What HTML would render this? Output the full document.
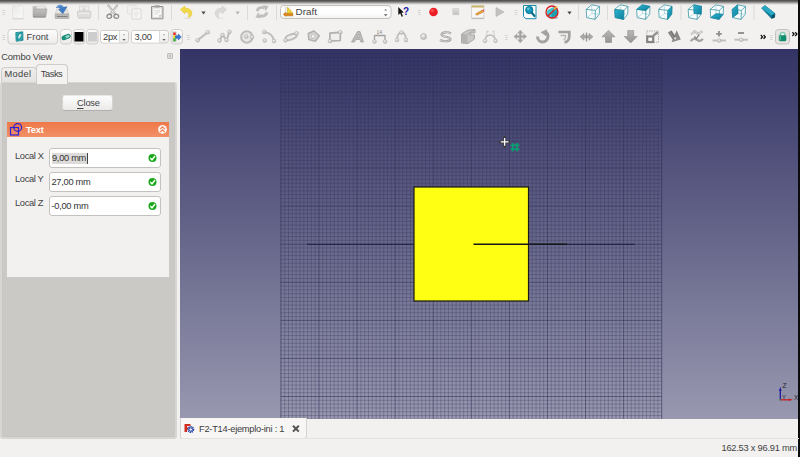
<!DOCTYPE html>
<html><head><meta charset="utf-8"><title>FreeCAD</title>
<style>
*{box-sizing:border-box;margin:0;padding:0}
html,body{width:800px;height:457px;overflow:hidden;background:#f2f1f0;font-family:"Liberation Sans","DejaVu Sans",sans-serif;font-size:9.3px;color:#424242}
.a{position:absolute}
.t{position:absolute;white-space:nowrap;line-height:12px;height:12px}
#topedge{left:0;top:0;width:800px;height:4.5px;background:linear-gradient(#484848,#696969 28%,#9a9998 52%,#d4d3d2 78%,#f2f1f0)}
#view{left:180px;top:49px;width:620px;height:369.5px;background:linear-gradient(#333365,#9898b0);overflow:hidden}
#panel{left:0;top:82px;width:176.5px;height:356.5px;background:#cbc9c6;border:2px solid #d8d6d3;border-top-width:1.5px;border-left-width:2px;border-radius:3px;box-shadow:inset 0 0 0 .5px #c6c4c1}
.tab{border:1px solid #cfcdcb;border-bottom:none;border-radius:4px 4px 0 0}
#form{left:7px;top:137px;width:162.4px;height:140px;background:#f2f1f0}
#hdr{left:7px;top:122px;width:162.4px;height:15px;background:linear-gradient(#ee7848,#f29068)}
.inp{position:absolute;left:49px;width:111.5px;height:19.6px;background:#fff;border:1px solid #c4c2bf;border-radius:3px}
.btn{position:absolute;border:1px solid #c6c4c1;border-radius:3px;background:linear-gradient(#fdfdfd,#ebeae8)}
.sep{position:absolute;width:1px;background:#dcdad8;top:5px;height:15px}
.grip{position:absolute;width:2px}
</style></head><body>
<div class="a" id="topedge"></div>

<!-- TOOLBAR ROW 1 -->
<svg class="a" style="left:0;top:0" width="800" height="49" viewBox="0 0 800 49">
<defs>
<linearGradient id="gy" x1="0" y1="0" x2="0" y2="1"><stop offset="0" stop-color="#fdfdfd"/><stop offset="1" stop-color="#ecebe9"/></linearGradient>
<linearGradient id="gt" x1="0" y1="0" x2="1" y2="1"><stop offset="0" stop-color="#2fb4d0"/><stop offset="1" stop-color="#0b7f9d"/></linearGradient>
<linearGradient id="gcb" x1="0" y1="0" x2="0" y2="1"><stop offset="0" stop-color="#f4f3f2"/><stop offset=".2" stop-color="#fff"/><stop offset=".7" stop-color="#fdfdfd"/><stop offset="1" stop-color="#f0efee"/></linearGradient><linearGradient id="gnew" x1="0" y1="0" x2="1" y2="1"><stop offset="0" stop-color="#e9e8e7"/><stop offset="1" stop-color="#fafaf9"/></linearGradient><linearGradient id="gfold" x1="0" y1="0" x2="0" y2="1"><stop offset="0" stop-color="#c1c0be"/><stop offset="1" stop-color="#a5a4a2"/></linearGradient><g id="grip" fill="#d6d4d1"><rect x="0" y="0" width="2.6" height="1"/><rect x="0" y="2" width="2.6" height="1"/><rect x="0" y="4" width="2.6" height="1"/></g>
<path id="dd" d="M-2.1 -1.4H2.1L0 1.5Z"/>
<g id="cube" fill="none" stroke="#2f8fa2" stroke-width=".75" stroke-linejoin="round"><path d="M-6.8 -2.6L-1.3 -7.2L6.5 -5.6L6.2 2.2L2.1 7.4L-6.3 5.6Z" fill="#fbfdfd"/><path d="M-1.0 1.6L-1.3 -7.2M-1.0 1.6L6.2 2.2M-1.0 1.6L-6.3 5.6" stroke="#9dcfd9" stroke-width=".7"/><path d="M-6.8 -2.6L2.4 -1.6L6.5 -5.6M2.4 -1.6L2.1 7.4"/></g>
</defs>
<!-- row1 -->
<use href="#grip" x="2.5" y="10"/>
<!-- new -->
<path d="M12.500 5.700H21.300L23.400 7.800V18.300H12.500Z" fill="url(#gnew)" stroke="#e2e1df" stroke-width=".7"/><circle cx="21.600" cy="8.100" r="1.300" fill="#fbfbfa"/><path d="M12.300 18.900H23.600" stroke="#d2d1cf" stroke-width="1"/>
<!-- open -->
<path d="M33 6.500H36.500L37.300 7.500H45.800V16.800H33Z" fill="#c6c5c3" stroke="#b2b1af" stroke-width=".6"/><path d="M36.800 5.800H45.300V9.500H36.800Z" fill="#e9e8e6" stroke="#cfcecc" stroke-width=".5"/><path d="M34.300 9H47L45.500 17H33.300Z" fill="url(#gfold)" stroke="#a09f9d" stroke-width=".6"/><path d="M33.300 17.100H45.500" stroke="#8f8e8c" stroke-width=".8"/>
<!-- save -->
<path d="M56.800 9H66.800L68.700 14H55.300Z" fill="#e6e5e3" stroke="#c4c3c1" stroke-width=".6"/><path d="M55.200 14H68.800V18.500H55.200Z" fill="#b9b8b6" stroke="#a3a2a0" stroke-width=".6"/><path d="M57 16.500H67.500" stroke="#7a7977" stroke-width=".9"/>
<path d="M56.300 7.600C57.500 5 61.500 4 63.800 7.300L66.900 6.700L62.800 13.600L58.700 9.500L60.800 9C60 7.500 58 7 56.300 7.600Z" fill="#3f7cc6" stroke="#2c5fa6" stroke-width=".6" stroke-linejoin="round"/><path d="M57.300 6.800C58.800 5.300 61.500 5.200 63 7.200" fill="none" stroke="#7fb0e4" stroke-width=".8"/>
<!-- print -->
<path d="M79.500 6.200H88.700V11H79.500Z" fill="#efeeec" stroke="#d3d2d0" stroke-width=".7"/><path d="M84.100 7.500V10M82.900 9L84.100 10.300L85.300 9" fill="none" stroke="#c9c8c6" stroke-width=".9"/><rect x="77.500" y="11" width="13.400" height="6.500" rx="1.200" fill="#dfdedc" stroke="#c9c8c6" stroke-width=".7"/><path d="M79 13.300H89.500" stroke="#efeeec" stroke-width="1"/><path d="M78.200 18.100H90.300" stroke="#cfcecc" stroke-width="1"/>
<rect x="98" y="5" width="1" height="15" fill="#dcdad8"/>
<!-- cut -->
<g fill="none" stroke-linecap="round"><path d="M108.300 5.500L115.300 14.500M117.200 5.500L110.200 14.500" stroke="#b3b2b0" stroke-width="2.100"/><path d="M108.600 6.300L114.500 13.800M116.900 6.300L111 13.800" stroke="#efeeec" stroke-width=".8"/><ellipse cx="109.300" cy="16.300" rx="2.400" ry="2" stroke="#8c8b89" stroke-width="1.250" transform="rotate(-20 109.300 16.300)"/><ellipse cx="116.300" cy="16.300" rx="2.400" ry="2" stroke="#8c8b89" stroke-width="1.250" transform="rotate(20 116.300 16.300)"/></g>
<!-- copy -->
<path d="M127.500 5.500H136V14H127.500Z" fill="#f1f0ef" stroke="#e0dfdd" stroke-width=".8"/><path d="M132 9H141V19H132Z" fill="#f6f6f5" stroke="#d3d2d0" stroke-width=".8"/><path d="M134 12H139M134 14H139M134 16H138" stroke="#dad9d7" stroke-width=".7"/>
<!-- paste -->
<path d="M151.500 6.500H163V18.800H151.500Z" fill="#dad9d7" stroke="#949391" stroke-width="1"/><path d="M153 8.300H161.500V15L159.300 17.300H153Z" fill="#fafaf9" stroke="#d6d5d3" stroke-width=".4"/><rect x="154.800" y="5.300" width="4.900" height="2.200" rx=".6" fill="#a3a2a0"/><path d="M154.500 10.500H160M154.500 12.300H160M154.500 14.100H158.500" stroke="#cfcecc" stroke-width=".7"/><path d="M161.500 15L159.300 17.300V15Z" fill="#bdbcba"/>
<rect x="171" y="5" width="1" height="15" fill="#dcdad8"/>
<!-- undo -->
<path d="M180.300 9.500L185 6V8.300C189.500 8 192.300 10.500 191.800 14C191.500 16 190 17.300 188 17.500C189.500 15.500 189.300 12 185 11.800V13.800Z" fill="#f2d94a" stroke="#e6c62e" stroke-width=".6"/><ellipse cx="187.500" cy="18.200" rx="4" ry=".8" fill="#e3e1de"/>
<use href="#dd" x="203.500" y="13" fill="#4a4a48"/>
<!-- redo -->
<path d="M226.700 9.500L222 6V8.300C217.500 8 214.700 10.500 215.200 14C215.500 16 217 17.300 219 17.500C217.500 15.500 217.700 12 222 11.800V13.800Z" fill="#dad9d7" stroke="#cfcecc" stroke-width=".6"/><ellipse cx="220" cy="18.200" rx="4" ry=".8" fill="#e6e4e2"/>
<use href="#dd" x="237.700" y="13" fill="#b3b2b0"/>
<rect x="247" y="5" width="1" height="15" fill="#dcdad8"/>
<!-- refresh -->
<g fill="none" stroke="#c0bfbd" stroke-width="2.900"><path d="M257.300 11.200C257.500 8 261.500 6.300 264.300 8.200"/><path d="M266.700 12.300C266.500 15.500 262.500 17.200 259.700 15.300"/></g><path d="M262.800 5.200L268.600 6L265.800 11.300Z" fill="#c0bfbd"/><path d="M261.200 18.300L255.400 17.500L258.200 12.200Z" fill="#c0bfbd"/>
<rect x="276" y="5" width="1" height="15" fill="#dcdad8"/>
<!-- combo -->
<rect x="280.500" y="5.500" width="110.500" height="13" rx="3" fill="url(#gcb)" stroke="#c4c2bf" stroke-width="1"/>
<path d="M285.500 7V13" stroke="#d9d8d6" stroke-width="1.200"/><path d="M283.400 14.200L285.300 12.600V13.300H292.800V15.800H285.300V16.300Z" fill="#e8870f" stroke="#a35a08" stroke-width=".5" stroke-linejoin="round"/><path d="M287.300 7.200C289.500 8.500 291.500 11 292.500 13.200H287.300Z" fill="#f0d23c" stroke="#b8961a" stroke-width=".5"/>
<path d="M384 10.600L385.700 8.700L387.400 10.600Z" fill="#8e8d8b"/><path d="M383.900 14.300L385.700 16.300L387.500 14.300Z" fill="#5c5b59"/>
<!-- whats this -->
<path d="M398.300 7L398.300 15L400.200 13.300L401.700 16.800L403 16.200L401.500 12.800L403.800 12.600Z" fill="#111"/>
<text x="403" y="15" font-family="Liberation Sans,sans-serif" font-weight="bold" font-size="10" fill="#1a1aa8">?</text>
<use href="#grip" x="418" y="10"/>
<circle cx="433.500" cy="12" r="4.300" fill="#ee1c24"/><circle cx="432.300" cy="10.600" r="1.800" fill="#f6625f" opacity=".7"/>
<rect x="452.500" y="8.500" width="6.600" height="6.600" fill="#c9c8c6"/><rect x="452.500" y="8.500" width="6.600" height="3" fill="#d6d5d3"/>
<!-- macro edit -->
<path d="M471.500 6H484V18H471.500Z" fill="#f7f6f4" stroke="#cfcdc9" stroke-width=".8"/><rect x="471.500" y="5.500" width="12.500" height="2" fill="#c8b46a"/><path d="M471.500 18.600H484" stroke="#bdbbb8" stroke-width="1"/><path d="M475.500 14L482.500 10L483.800 11.700L476.800 15.300Z" fill="#f0a23a" stroke="#b36b12" stroke-width=".5"/><path d="M482.500 10L484.300 9.300L483.800 11.700Z" fill="#e0455a"/>
<path d="M496 7.500L504 12L496 16.500Z" fill="#c3c2c0" stroke="#b1b0ae" stroke-width=".6"/>
<use href="#grip" x="514.700" y="10"/>
<!-- zoom fit -->
<path d="M523.500 5.500H536V18.700H526L523.500 16.500Z" fill="#fff" stroke="#1b8ea9" stroke-width="1"/><circle cx="529.300" cy="10" r="3.700" fill="#1398b8" stroke="#0a6f8c" stroke-width=".8"/><circle cx="528.300" cy="8.800" r="1.400" fill="#63c7dc"/><path d="M531.800 12.700L534.500 16" stroke="#0a6f8c" stroke-width="2.200" stroke-linecap="round"/>
<!-- no draw -->
<path d="M547.500 10.500L553.500 7.500L557.500 9.500V15L551.500 17.500L547.500 15.500Z" fill="#35cbd6" stroke="#1aa5b3" stroke-width=".5"/><path d="M551.500 12.500L557.500 9.500V15L551.500 17.500Z" fill="#19a0b0"/><ellipse cx="554" cy="17.800" rx="4" ry="1" fill="#777" opacity=".6"/>
<circle cx="552" cy="12" r="6" fill="none" stroke="#d91c1c" stroke-width="1.300"/><path d="M547.700 16.200L556.300 7.800" stroke="#d91c1c" stroke-width="1.300"/><path d="M554 9.300L557.500 6.300" stroke="#f2c53a" stroke-width="1.200"/>
<use href="#dd" x="569.500" y="13" fill="#4a4a48"/>
<rect x="578" y="5" width="1" height="15" fill="#dcdad8"/>
<!-- cubes -->
<use href="#cube" x="593" y="12"/>
<rect x="607" y="5" width="1" height="15" fill="#dcdad8"/>
<use href="#cube" x="621.500" y="12"/><path d="M614.8 9.4L623.9 10.4L623.6 19.4L615.2 17.6Z" fill="url(#gt)" stroke="#0d7a94" stroke-width=".5"/>
<use href="#cube" x="643.500" y="12"/><path d="M636.8 9.4L642.2 4.8L650.0 6.4L645.9 10.4Z" fill="url(#gt)" stroke="#0d7a94" stroke-width=".5"/>
<use href="#cube" x="665.500" y="12"/><path d="M667.9 10.4L672.0 6.4L671.7 14.2L667.6 19.4Z" fill="url(#gt)" stroke="#0d7a94" stroke-width=".5"/>
<rect x="680.500" y="5" width="1" height="15" fill="#dcdad8"/>
<use href="#cube" x="695" y="12"/><path d="M693.7 4.8L701.5 6.4L701.2 14.2L694.0 13.6Z" fill="url(#gt)" stroke="#0d7a94" stroke-width=".5"/>
<use href="#cube" x="717" y="12"/><path d="M710.7 17.6L719.1 19.4L723.2 14.2L716.0 13.6Z" fill="url(#gt)" stroke="#0d7a94" stroke-width=".5"/>
<use href="#cube" x="739" y="12"/><path d="M732.2 9.4L737.7 4.8L738.0 13.6L732.7 17.6Z" fill="url(#gt)" stroke="#0d7a94" stroke-width=".5"/>
<rect x="753.500" y="5" width="1" height="15" fill="#dcdad8"/>
<!-- measure -->
<path d="M761.500 8L765 5.500L775 13.500L774.500 17.500L771.500 18.500Z" fill="#0f7f9c" stroke="#0a5f78" stroke-width=".5"/><path d="M761.500 8L765 5.500L775 13.500L771.800 15.500Z" fill="#2aa9c6"/><path d="M771.800 15.500L775 13.500L774.500 17.500L771.500 18.500Z" fill="#084e63"/>
<defs>
<radialGradient id="nd" cx=".4" cy=".35" r=".7"><stop offset="0" stop-color="#f2f2f1"/><stop offset="1" stop-color="#b5b4b2"/></radialGradient>
<circle id="n" r="1.900" fill="url(#nd)" stroke="#aeadab" stroke-width=".5"/>
<linearGradient id="ga" x1="0" y1="0" x2="0" y2="1"><stop offset="0" stop-color="#b9b8b6"/><stop offset="1" stop-color="#949391"/></linearGradient>
</defs>
<use href="#grip" x="2.500" y="35"/>
<!-- Front button -->
<rect x="8" y="29.500" width="49.500" height="14.500" rx="3" fill="url(#gy)" stroke="#d0cecb" stroke-width="1"/>
<path d="M15.800 32.600L22.800 31.800L23 40.300L16.200 41.300Z" fill="#1f979e" stroke="#1a858d" stroke-width=".8" stroke-linejoin="round"/><path d="M17.900 37.500L20 33.700L21.500 35L19.400 38.800Z" fill="#f6f5f3"/><path d="M15.500 34.500L17 33M15.500 38L19 32.500M16.500 41L22.800 33M19.500 41L23 36.500" stroke="#5cc4c6" stroke-width=".5" fill="none"/>
<text x="26.600" y="39.900" font-family="Liberation Sans,sans-serif" font-size="9.400" letter-spacing="0" fill="#444">Front</text>
<!-- small button -->
<rect x="60.500" y="29.500" width="11" height="14.500" rx="3" fill="url(#gy)" stroke="#d0cecb" stroke-width="1"/>
<g transform="rotate(-22 66 37)"><rect x="61.800" y="35.300" width="8.600" height="3.600" rx="1.800" fill="#8fd6c9" stroke="#14806e" stroke-width="1"/><rect x="61.800" y="35.300" width="4" height="3.600" rx="1.800" fill="#17917c"/></g>
<!-- swatches -->
<rect x="73.500" y="29.500" width="11" height="14.500" rx="3" fill="url(#gy)" stroke="#d0cecb" stroke-width="1"/><rect x="74.500" y="32" width="9" height="9.500" fill="#000"/>
<rect x="86.500" y="29.500" width="11.500" height="14.500" rx="3" fill="url(#gy)" stroke="#d0cecb" stroke-width="1"/><rect x="88" y="32" width="9" height="9.500" fill="#cdcdcd"/>
<!-- spin 2px -->
<rect x="100.500" y="30.500" width="28" height="12.500" rx="2.500" fill="url(#gy)" stroke="#d0cecb" stroke-width="1"/><path d="M101 33a2 2 0 0 1 2-2H119.500V42.500H103a2 2 0 0 1-2-2Z" fill="#fff"/><path d="M119.500 31V42.500" stroke="#dddbd8" stroke-width="1"/>
<text x="103" y="40.300" font-family="Liberation Sans,sans-serif" font-size="9.400" letter-spacing="-0.300" fill="#3c3c3c">2px</text>
<path d="M122.700 35.200L124 33.800L125.300 35.200Z" fill="#a09f9d"/><path d="M122.300 39L124 40.700L125.700 39Z" fill="#5c5b59"/>
<!-- spin 3,00 -->
<rect x="131.500" y="30.500" width="37" height="12.500" rx="2.500" fill="url(#gy)" stroke="#d0cecb" stroke-width="1"/><path d="M132 33a2 2 0 0 1 2-2H159.500V42.500H134a2 2 0 0 1-2-2Z" fill="#fff"/><path d="M159.500 31V42.500" stroke="#dddbd8" stroke-width="1"/>
<text x="134.500" y="40.300" font-family="Liberation Sans,sans-serif" font-size="9.400" letter-spacing="-0.300" fill="#3c3c3c">3,00</text>
<path d="M162.700 35.200L164 33.800L165.300 35.200Z" fill="#a09f9d"/><path d="M162.300 39L164 40.700L165.700 39Z" fill="#5c5b59"/>
<!-- apply button -->
<rect x="171" y="29.500" width="11.500" height="14.500" rx="3" fill="url(#gy)" stroke="#d0cecb" stroke-width="1"/>
<rect x="173" y="32" width="3" height="9.500" fill="#fff" stroke="#888" stroke-width=".5"/><rect x="173.300" y="32.500" width="2.400" height="2.600" fill="#e8261c"/><rect x="173.300" y="35.300" width="2.400" height="2.600" fill="#f2d218"/><rect x="173.300" y="38.300" width="2.400" height="2.800" fill="#2bb52b"/>
<path d="M175.500 35.800H178.300V34L181.300 37L178.300 40V38.300H175.500Z" fill="#3b7ad6" stroke="#1d4fa0" stroke-width=".5"/>
<use href="#grip" x="187" y="35"/>
<!-- line -->
<path d="M197.400 40.400L207.900 32.100" stroke="#c3c2c0" stroke-width="2.200"/><use href="#n" x="197.600" y="40.300"/><use href="#n" x="207.800" y="32.200"/>
<!-- wire -->
<path d="M219.500 40.500L222.500 35L226.500 40L229.500 31.800" fill="none" stroke="#bdbcba" stroke-width="2"/><use href="#n" x="219.500" y="40.500"/><use href="#n" x="222.500" y="35"/><use href="#n" x="226.500" y="40"/><use href="#n" x="229.500" y="31.800"/>
<!-- circle -->
<circle cx="246.800" cy="37" r="5.700" fill="#e9e8e6" stroke="#bdbcba" stroke-width="2"/><use href="#n" x="246.200" y="36.500"/><use href="#n" x="252" y="37"/>
<!-- arc -->
<path d="M264.500 32C270 33 273.500 36.500 274 41" fill="none" stroke="#c1c0be" stroke-width="2"/><use href="#n" x="264.200" y="32"/><use href="#n" x="264.700" y="40.500"/><use href="#n" x="274" y="41"/>
<!-- ellipse -->
<ellipse cx="291" cy="37" rx="5.800" ry="2.500" transform="rotate(-20 291 37)" fill="#eeedeb" stroke="#bdbcba" stroke-width="1.900"/><use href="#n" x="285.500" y="40.300"/><use href="#n" x="296.600" y="33.300"/>
<!-- polygon -->
<path d="M308.300 33.500L314 31L319.300 35.800L315.300 41.300L308.800 39.500Z" fill="#d9d8d6" stroke="#b1b0ae" stroke-width="1.500" stroke-linejoin="round"/><circle cx="313.200" cy="36.300" r="2.100" fill="#f0efed" stroke="#b9b8b6" stroke-width=".8"/>
<!-- rectangle -->
<path d="M330 33.200L340.500 32.300L340.200 40.500L329.800 41Z" fill="#f0efed" stroke="#b1b0ae" stroke-width="1.700"/><use href="#n" x="340.300" y="32.200"/><use href="#n" x="330" y="41"/>
<!-- A -->
<path d="M351.500 42L357.500 31.500H360L363.500 42H360.800L360 39.500H355.800L354.500 42ZM357 37.500H359.500L358.600 34.300Z" fill="#bdbcba" stroke="#9c9b99" stroke-width=".7" fill-rule="evenodd"/>
<!-- dimension -->
<path d="M374.500 35V42M385 35V42M374.500 35.500H385" stroke="#a3a2a0" stroke-width="1.300" fill="none"/><use href="#n" x="374.500" y="41.500"/><use href="#n" x="385" y="41.500"/><text x="376.500" y="34" font-family="Liberation Sans,sans-serif" font-size="5" fill="#8a8987">14</text>
<!-- arc 3pt -->
<path d="M397 40C397 34.500 399.500 32.500 401.500 32.500C403.500 32.500 406 34.500 406 40" fill="none" stroke="#c1c0be" stroke-width="2"/><use href="#n" x="397" y="40"/><use href="#n" x="406" y="40"/><use href="#n" x="401.500" y="32.500"/>
<!-- point -->
<circle cx="423.500" cy="36.500" r="3" fill="url(#nd)" stroke="#aeadab" stroke-width=".6"/>
<!-- S -->
<path d="M451 33.500C448 31.500 442 32 441.500 34.500C441 37 450 36.500 450.500 39C451 41.500 443.500 42 440 40" fill="none" stroke="#9b9a98" stroke-width="2.200"/><path d="M451 33.500C448 31.500 442 32 441.500 34.500C441 37 450 36.500 450.500 39C451 41.500 443.500 42 440 40" fill="none" stroke="#e4e3e1" stroke-width=".8"/>
<!-- facebinder -->
<path d="M461.500 34L468 30L475 29.500V33H470.500V35H474.500V39L468 43.500L461.500 43Z" fill="#c9c8c6" stroke="#9f9e9c" stroke-width=".8" stroke-linejoin="round"/><path d="M461.500 34L467.500 34.500V43.500L461.500 43Z" fill="#b4b3b1"/><path d="M467.500 34.500L475 29.500" stroke="#9f9e9c" stroke-width=".7"/>
<!-- bez -->
<path d="M485 40.500C486 33 494 33 495.500 40.500" fill="none" stroke="#bcbbb9" stroke-width="1.500"/><path d="M485 40.500L487.500 31M495.500 40.500L493.500 31" stroke="#c9c8c6" stroke-width=".8"/><use href="#n" x="485" y="40.800"/><use href="#n" x="495.500" y="40.800"/><circle cx="487.500" cy="31.500" r="1.100" fill="#d0cfcd"/><circle cx="493.500" cy="31.500" r="1.100" fill="#d0cfcd"/>
<use href="#grip" x="505" y="35"/>
<!-- move -->
<path d="M520.300 30L523.100 33.200H521.300V35.500H523.600V33.700L526.800 36.500L523.600 39.300V37.500H521.300V39.800H523.100L520.300 43L517.500 39.800H519.300V37.500H517V39.300L513.800 36.500L517 33.700V35.500H519.300V33.200H517.500Z" fill="#a3a2a0" stroke="#b5b4b2" stroke-width=".4"/>
<!-- rotate -->
<path d="M537.500 36.500C537.500 40 540 42 542.500 42C545.500 42 548 39.500 548 36.500C548 34 546.500 32.500 545 32" fill="none" stroke="#a3a2a0" stroke-width="3"/><path d="M547 29.300L540.500 32.200L546 36Z" fill="#a3a2a0"/>
<!-- offset -->
<path d="M558.500 32H569.300V36C569.300 39.500 567.500 42 564.500 42.500" fill="none" stroke="#a3a2a0" stroke-width="2.700"/><path d="M560.500 35.500H565.500V37C565.500 38.500 564.800 39.500 563.500 40" fill="none" stroke="#b9b8b6" stroke-width="1.400"/>
<!-- trimex -->
<path d="M580 36.800L584 33.300V35.600H589V33.300L593 36.800L589 40.300V38H584V40.300Z" fill="#a9a8a6" stroke="#959492" stroke-width=".5"/><path d="M586.500 32.500V41.500" stroke="#959492" stroke-width="1.300"/>
<!-- up -->
<path d="M608.500 30.300L615 36.800H611.500V42.500H605.500V36.800H602Z" fill="url(#ga)" stroke="#8f8e8c" stroke-width=".6"/>
<!-- down -->
<path d="M630.700 43L637.200 36.500H633.700V30.500H627.700V36.500H624.200Z" fill="url(#ga)" stroke="#8f8e8c" stroke-width=".6"/>
<!-- scale -->
<rect x="646.800" y="31" width="11.700" height="11.300" fill="none" stroke="#a9a8a6" stroke-width="1" stroke-dasharray="1.300 1.100"/><rect x="647.200" y="36.500" width="6" height="5.500" fill="#fafaf9" stroke="#858482" stroke-width="2.200"/><path d="M653.800 35.300L657 32.800" stroke="#969593" stroke-width="2.400" stroke-linecap="round"/>
<!-- shape2dview -->
<path d="M676.700 30.300L680.800 39.600L671.500 42.200Z" fill="#8b8a88"/><path d="M668.300 32.600L671.500 30.800L675.900 37.400L672.800 39.200Z" fill="#7b7a78" stroke="#6a6967" stroke-width=".5"/><path d="M669.800 32.300L674.200 38.700" stroke="#a3a2a0" stroke-width=".8"/><circle cx="675.200" cy="38.300" r="1.100" fill="#f2f1f0"/>
<!-- wire2bspline -->
<path d="M691 34.500L694.800 31.200L697.800 34L702.500 31.300" fill="none" stroke="#bbbab8" stroke-width="2.300" stroke-linejoin="round"/><path d="M691 34.500L694.800 31.200L697.800 34L702.500 31.300" fill="none" stroke="#ecebe9" stroke-width=".7"/><path d="M690.800 41.300C692.500 38.300 695 38.200 697 39.800C699 41.400 701.500 41.300 702.800 38.800" fill="none" stroke="#a3a2a0" stroke-width="2.300"/><path d="M694.300 36.300L696.300 38.500L699.300 34.600" fill="none" stroke="#7f7e7c" stroke-width="1.200"/>
<!-- add point -->
<path d="M719 31V36.600M716.200 33.800H721.800" stroke="#8f8e8c" stroke-width="1.800"/><path d="M712.500 40.500H726" stroke="#c1c0be" stroke-width="2"/><use href="#n" x="719.200" y="40.500"/>
<!-- del point -->
<path d="M738 33H744" stroke="#8f8e8c" stroke-width="1.900"/><path d="M734.500 39.700H748" stroke="#c1c0be" stroke-width="2"/><use href="#n" x="741.200" y="39.700"/>
<!-- chevrons -->
<path d="M760.800 35L762.500 36.900L760.800 38.800M763.600 35L765.300 36.900L763.600 38.800" fill="none" stroke="#111" stroke-width="1.300"/>
<use href="#grip" x="770" y="35"/>
<rect x="775.500" y="29.500" width="14" height="14.500" rx="3" fill="#e6e4e1" stroke="#c4c2bf" stroke-width="1"/>
<path d="M780.300 36V34.600C780.300 31.800 784.900 31.800 784.900 34.600V36" fill="#fbfbfa" stroke="#7fcdb6" stroke-width="1.400"/><rect x="779.200" y="35.400" width="6.800" height="5.500" rx=".8" fill="#10906f" stroke="#0c7358" stroke-width=".5"/><rect x="779.700" y="35.900" width="1.300" height="4.500" fill="#5fc4a6" opacity=".8"/>
<path d="M792.400 32.200L794.100 34.100L792.400 36M795.200 32.200L796.900 34.100L795.200 36" fill="none" stroke="#111" stroke-width="1.300"/>

</svg>

<!-- TOOLBAR ROW 2 -->
<div id="tb2"></div>

<div class="t" style="left:295.5px;top:5.7px;font-size:9.9px;letter-spacing:0.05px">Draft</div>
<!-- COMBO VIEW -->
<svg class="a" style="left:167px;top:53px" width="6" height="6" viewBox="0.200 0.700 8.600 8.600"><rect x=".7" y="1.200" width="7.600" height="7.600" rx="1.800" fill="#e4e3e1" stroke="#9b9a98" stroke-width=".9"/><path d="M2.700 3.200L6.300 6.800M6.300 3.200L2.700 6.800" stroke="#8a8987" stroke-width="1"/><circle cx="4.500" cy="5" r="1.100" fill="#e4e3e1"/></svg>
<div class="t" style="left:1.2px;top:51px;font-size:9.4px;letter-spacing:-0.2px">Combo View</div>
<div class="a tab" style="left:0.6px;top:66.5px;width:36.5px;height:16px;background:linear-gradient(#efeeed,#e4e2e0)"></div>
<div class="a tab" style="left:36px;top:64px;width:32px;height:19.5px;background:#f4f3f2;z-index:3"></div>
<div class="t" style="left:4.5px;top:68px;letter-spacing:0.3px">Model</div>
<div class="t" style="left:40.8px;top:67.5px;letter-spacing:-0.45px;z-index:4">Tasks</div>
<div class="a" id="panel"></div>
<div class="btn" style="left:62px;top:95px;width:51px;height:15.5px;border-color:#e9e7e5 #d6d4d1 #b2b0ad"></div>
<div class="t" style="left:77px;top:97px;letter-spacing:-0.2px"><u style="text-underline-offset:1.5px">C</u>lose</div>
<div class="a" id="hdr"></div>
<div class="a" id="form"></div>
<div class="t" style="left:26px;top:123.5px;color:#fff;font-weight:bold;letter-spacing:-0.2px">Text</div>
<div class="t" style="left:15px;top:149.5px;letter-spacing:-0.35px">Local X</div>
<div class="t" style="left:15px;top:173px;letter-spacing:-0.35px">Local Y</div>
<div class="t" style="left:15px;top:197px;letter-spacing:-0.35px">Local Z</div>
<div class="inp" style="top:148px"></div>
<div class="inp" style="top:172px"></div>
<div class="inp" style="top:196px"></div>
<div class="a" style="left:52px;top:153px;width:35.5px;height:10.5px;background:#dddbd9"></div>
<div class="a" style="left:87px;top:152.5px;width:1px;height:11.5px;background:#444"></div>
<div class="t" style="left:52px;top:152px;letter-spacing:-0.3px;color:#333">9,00 mm</div>
<div class="t" style="left:51.5px;top:175.8px;letter-spacing:-0.3px;color:#333">27,00 mm</div>
<div class="t" style="left:51.5px;top:199.8px;letter-spacing:-0.3px;color:#333">-0,00 mm</div>


<svg class="a" style="left:7px;top:122px;z-index:5" width="163" height="100" viewBox="7 122 163 100">
<rect x="10.500" y="127.500" width="8" height="7.500" fill="none" stroke="#2a22d8" stroke-width="1.200"/><circle cx="17.700" cy="127.400" r="3.900" fill="none" stroke="#2a22d8" stroke-width="1.250"/>
<circle cx="162.500" cy="129.400" r="4.400" fill="#fdf6f2"/><path d="M160.200 129.200L162.500 126.900L164.800 129.200M160.200 132.200L162.500 129.900L164.800 132.200" fill="none" stroke="#ee7d50" stroke-width="1.100"/>
<g id="chk"><circle cx="152.500" cy="158" r="4" fill="#18a818"/><path d="M150.300 158L152 159.900L155 156" fill="none" stroke="#fff" stroke-width="1.500"/></g>
<use href="#chk" y="24"/><use href="#chk" y="48"/>
</svg>
<!-- 3D VIEW -->
<div class="a" id="view">
<svg width="620" height="370" viewBox="180 49 620 370" style="position:absolute;left:0;top:0">
<g id="grid" fill="none" stroke="#2f2f55"><path stroke-width="0.9" stroke-opacity="0.32" d="M284.71 53.8V419.5M288.52 53.8V419.5M292.32 53.8V419.5M296.13 53.8V419.5M299.94 53.8V419.5M303.75 53.8V419.5M307.56 53.8V419.5M311.36 53.8V419.5M315.17 53.8V419.5M322.79 53.8V419.5M326.60 53.8V419.5M330.40 53.8V419.5M334.21 53.8V419.5M338.02 53.8V419.5M341.83 53.8V419.5M345.64 53.8V419.5M349.44 53.8V419.5M353.25 53.8V419.5M360.87 53.8V419.5M364.68 53.8V419.5M368.48 53.8V419.5M372.29 53.8V419.5M376.10 53.8V419.5M379.91 53.8V419.5M383.72 53.8V419.5M387.52 53.8V419.5M391.33 53.8V419.5M398.95 53.8V419.5M402.76 53.8V419.5M406.56 53.8V419.5M410.37 53.8V419.5M414.18 53.8V419.5M417.99 53.8V419.5M421.80 53.8V419.5M425.60 53.8V419.5M429.41 53.8V419.5M437.03 53.8V419.5M440.84 53.8V419.5M444.64 53.8V419.5M448.45 53.8V419.5M452.26 53.8V419.5M456.07 53.8V419.5M459.88 53.8V419.5M463.68 53.8V419.5M467.49 53.8V419.5M475.11 53.8V419.5M478.92 53.8V419.5M482.72 53.8V419.5M486.53 53.8V419.5M490.34 53.8V419.5M494.15 53.8V419.5M497.96 53.8V419.5M501.76 53.8V419.5M505.57 53.8V419.5M513.19 53.8V419.5M517.00 53.8V419.5M520.80 53.8V419.5M524.61 53.8V419.5M528.42 53.8V419.5M532.23 53.8V419.5M536.04 53.8V419.5M539.84 53.8V419.5M543.65 53.8V419.5M551.27 53.8V419.5M555.08 53.8V419.5M558.88 53.8V419.5M562.69 53.8V419.5M566.50 53.8V419.5M570.31 53.8V419.5M574.12 53.8V419.5M577.92 53.8V419.5M581.73 53.8V419.5M589.35 53.8V419.5M593.16 53.8V419.5M596.96 53.8V419.5M600.77 53.8V419.5M604.58 53.8V419.5M608.39 53.8V419.5M612.20 53.8V419.5M616.00 53.8V419.5M619.81 53.8V419.5M627.43 53.8V419.5M631.24 53.8V419.5M635.04 53.8V419.5M638.85 53.8V419.5M642.66 53.8V419.5M646.47 53.8V419.5M650.28 53.8V419.5M654.08 53.8V419.5M657.89 53.8V419.5M280.9 57.61H661.7M280.9 61.42H661.7M280.9 65.22H661.7M280.9 69.03H661.7M280.9 72.84H661.7M280.9 76.65H661.7M280.9 80.46H661.7M280.9 84.26H661.7M280.9 88.07H661.7M280.9 95.69H661.7M280.9 99.50H661.7M280.9 103.30H661.7M280.9 107.11H661.7M280.9 110.92H661.7M280.9 114.73H661.7M280.9 118.54H661.7M280.9 122.34H661.7M280.9 126.15H661.7M280.9 133.77H661.7M280.9 137.58H661.7M280.9 141.38H661.7M280.9 145.19H661.7M280.9 149.00H661.7M280.9 152.81H661.7M280.9 156.62H661.7M280.9 160.42H661.7M280.9 164.23H661.7M280.9 171.85H661.7M280.9 175.66H661.7M280.9 179.46H661.7M280.9 183.27H661.7M280.9 187.08H661.7M280.9 190.89H661.7M280.9 194.70H661.7M280.9 198.50H661.7M280.9 202.31H661.7M280.9 209.93H661.7M280.9 213.74H661.7M280.9 217.54H661.7M280.9 221.35H661.7M280.9 225.16H661.7M280.9 228.97H661.7M280.9 232.78H661.7M280.9 236.58H661.7M280.9 240.39H661.7M280.9 248.01H661.7M280.9 251.82H661.7M280.9 255.62H661.7M280.9 259.43H661.7M280.9 263.24H661.7M280.9 267.05H661.7M280.9 270.86H661.7M280.9 274.66H661.7M280.9 278.47H661.7M280.9 286.09H661.7M280.9 289.90H661.7M280.9 293.70H661.7M280.9 297.51H661.7M280.9 301.32H661.7M280.9 305.13H661.7M280.9 308.94H661.7M280.9 312.74H661.7M280.9 316.55H661.7M280.9 324.17H661.7M280.9 327.98H661.7M280.9 331.78H661.7M280.9 335.59H661.7M280.9 339.40H661.7M280.9 343.21H661.7M280.9 347.02H661.7M280.9 350.82H661.7M280.9 354.63H661.7M280.9 362.25H661.7M280.9 366.06H661.7M280.9 369.86H661.7M280.9 373.67H661.7M280.9 377.48H661.7M280.9 381.29H661.7M280.9 385.10H661.7M280.9 388.90H661.7M280.9 392.71H661.7M280.9 400.33H661.7M280.9 404.14H661.7M280.9 407.94H661.7M280.9 411.75H661.7M280.9 415.56H661.7M280.9 419.37H661.7"/><path stroke-width="1.0" stroke-opacity="0.58" d="M280.90 53.8V419.5M318.98 53.8V419.5M357.06 53.8V419.5M395.14 53.8V419.5M433.22 53.8V419.5M471.30 53.8V419.5M509.38 53.8V419.5M547.46 53.8V419.5M585.54 53.8V419.5M623.62 53.8V419.5M661.70 53.8V419.5M280.9 53.80H661.7M280.9 91.88H661.7M280.9 129.96H661.7M280.9 168.04H661.7M280.9 206.12H661.7M280.9 244.20H661.7M280.9 282.28H661.7M280.9 320.36H661.7M280.9 358.44H661.7M280.9 396.52H661.7"/></g>
<line x1="307" y1="244.3" x2="635" y2="244.3" stroke="#26264a" stroke-width="1.3"/>
<rect x="414" y="187" width="114.5" height="114" fill="#ffff14" stroke="#1a1a10" stroke-width="1.2"/>
<line x1="473.5" y1="244.3" x2="567" y2="244.3" stroke="#15151a" stroke-width="1.4"/>
<g><path d="M504.600 137.500V146.300M500.300 141.900H509" stroke="#3a3a3a" stroke-width="3" stroke-linecap="round"/><path d="M504.600 138V145.800M500.800 141.900H508.500" stroke="#fff" stroke-width="1.300"/></g>
<path d="M512.800 143V151.500M517 143V151.500M510.500 145.200H519.300M510.500 149.200H519.300" stroke="#0c9c70" stroke-width="1.700" fill="none"/>
<g><path d="M780.300 399.500V389" stroke="#1a1aa0" stroke-width="1.300"/><path d="M780.300 386.800L781.600 391H779Z" fill="#1a1aa0"/><path d="M780.500 399.800H790" stroke="#c81e1e" stroke-width="1.300"/><path d="M793 399.800L788.800 401V398.600Z" fill="#c81e1e"/><rect x="779.500" y="399.300" width="1.300" height="1.300" fill="#2a8a2a"/>
<text x="782.500" y="388" font-family="Liberation Sans,sans-serif" font-size="6.500" fill="#222">Z</text><text x="782" y="399" font-family="Liberation Sans,sans-serif" font-size="6" fill="#222">Y</text><text x="794" y="400" font-family="Liberation Sans,sans-serif" font-size="6.500" fill="#222">X</text></g>
</svg>
</div>

<!-- BOTTOM TAB -->
<div class="a" style="left:180px;top:418px;width:127px;height:20.5px;background:#f7f6f5;border:1px solid #d6d4d2;border-top:none;border-radius:0 0 3px 3px"></div>
<div class="t" style="left:199px;top:422.5px;letter-spacing:-0.26px;color:#3c3c3c">F2-T14-ejemplo-ini : 1</div>
<svg class="a" style="left:183px;top:422px" width="120" height="13" viewBox="183 422 120 13">
<path d="M184.500 424H190.500V426H187V427.500H189.500V429.500H187V432H184.500Z" fill="#d42a1c"/><circle cx="190.800" cy="429.500" r="2.700" fill="#f7f6f5" stroke="#2340a8" stroke-width="1.600" stroke-dasharray="1.300 .7"/><circle cx="190.800" cy="429.500" r="1.700" fill="none" stroke="#2340a8" stroke-width="1"/>
<path d="M293 425.800L298.800 431.600M298.800 425.800L293 431.600" stroke="#55534e" stroke-width="2"/>
</svg>
<!-- STATUS -->
<div class="t" style="right:3px;top:441.5px;letter-spacing:-0.24px">162.53 x 96.91 mm</div>
<div class="a" style="left:798.3px;top:0;width:1.7px;height:457px;background:#0c0c0c"></div><div class="a" style="left:180px;top:437.500px;width:619px;height:1px;background:#e6e4e2"></div>
</body></html>
